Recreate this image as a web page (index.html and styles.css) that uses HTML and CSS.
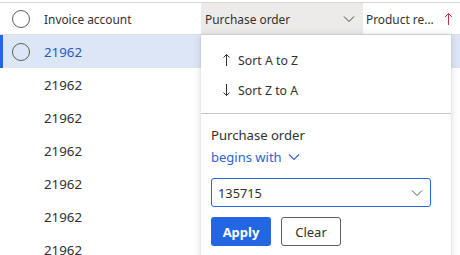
FILE: index.html
```html
<!DOCTYPE html>
<html>
<head>
<meta charset="utf-8">
<link rel="stylesheet" href="styles.css">
</head>
<body>
<div class="grid">
  <div class="row head">
    <div class="cell sel"><span class="circle"></span></div>
    <div class="cell inv">Invoice account</div>
    <div class="cell po active"><span>Purchase order</span>
      <svg class="chev" width="12" height="8" viewBox="0 0 12 8"><path d="M1 1.5 L6 6.5 L11 1.5" fill="none" stroke="#444" stroke-width="1"/></svg>
    </div>
    <div class="cell pr"><span>Product re...</span>
      <svg class="arrow" width="9" height="14" viewBox="0 0 9 14"><path d="M4.5 1.5 V13 M1 5 L4.5 1.5 L8 5" fill="none" stroke="#c4314b" stroke-width="1"/></svg>
    </div>
  </div>
  <div class="row selected">
    <div class="cell sel"><span class="circle"></span></div>
    <div class="cell inv">21962</div>
    <div class="cell po"></div>
    <div class="cell pr"></div>
  </div>
  <div class="row"><div class="cell sel"></div><div class="cell inv">21962</div><div class="cell po"></div><div class="cell pr"></div></div>
  <div class="row"><div class="cell sel"></div><div class="cell inv">21962</div><div class="cell po"></div><div class="cell pr"></div></div>
  <div class="row"><div class="cell sel"></div><div class="cell inv">21962</div><div class="cell po"></div><div class="cell pr"></div></div>
  <div class="row"><div class="cell sel"></div><div class="cell inv">21962</div><div class="cell po"></div><div class="cell pr"></div></div>
  <div class="row"><div class="cell sel"></div><div class="cell inv">21962</div><div class="cell po"></div><div class="cell pr"></div></div>
  <div class="row"><div class="cell sel"></div><div class="cell inv">21962</div><div class="cell po"></div><div class="cell pr"></div></div>

  <div class="menu">
    <div class="sorts">
      <div class="sort">
        <svg class="sarrow" width="9" height="14" viewBox="0 0 9 14"><path d="M4.5 1.5 V13 M1.5 4.5 L4.5 1.5 L7.5 4.5" fill="none" stroke="#323130" stroke-width="1"/></svg>
        <span>Sort A to Z</span>
      </div>
      <div class="sort">
        <svg class="sarrow" width="9" height="14" viewBox="0 0 9 14"><path d="M4.5 1 V12.5 M1.5 9.5 L4.5 12.5 L7.5 9.5" fill="none" stroke="#323130" stroke-width="1"/></svg>
        <span>Sort Z to A</span>
      </div>
    </div>
    <div class="filter">
      <div class="flabel">Purchase order</div>
      <div class="op">begins with
        <svg width="12" height="8" viewBox="0 0 12 8"><path d="M1 1.5 L6 6.5 L11 1.5" fill="none" stroke="#2b63d9" stroke-width="1.1"/></svg>
      </div>
      <div class="input"><span>135715</span>
        <svg width="12" height="8" viewBox="0 0 12 8"><path d="M1 1.5 L6 6.5 L11 1.5" fill="none" stroke="#555" stroke-width="1"/></svg>
      </div>
      <div class="buttons">
        <button class="btn apply">Apply</button>
        <button class="btn clear">Clear</button>
      </div>
    </div>
  </div>
</div>
</body>
</html>
```
FILE: styles.css
```css
* { box-sizing: border-box; }
html, body { margin: 0; padding: 0; background: #fff; }
body {
  font-family: "Noto Sans", "Open Sans", sans-serif;
  font-size: 13.3px;
  color: #323130;
  width: 460px;
  height: 255px;
  overflow: hidden;
}
.grid {
  position: relative;
  border-top: 1px solid #d6d6d6;
  margin-top: 2px;
}
.row {
  display: grid;
  grid-template-columns: 34px 167px 162px 97px;
  height: 33px;
}
.row.head {
  height: 32px;
  border-bottom: 1px solid #e1dfdd;
  font-size: 11.9px;
}
.cell {
  display: flex;
  align-items: center;
  white-space: nowrap;
  overflow: hidden;
}
.sel { padding-left: 12px; }
.circle {
  width: 18px; height: 18px;
  border: 1px solid #605e5c;
  border-radius: 50%;
  display: block;
}
.inv { padding-left: 10px; }
.po { padding-left: 4px; }
.head .po.active {
  background: #edebe9;
  justify-content: space-between;
  padding-right: 8px;
}
.pr { padding-left: 3px; }
.pr .arrow { margin-left: 10px; flex-shrink: 0; }
.selected { background: #dce6f7; position: relative; }
.selected::before {
  content: "";
  position: absolute;
  left: 0; top: 0; bottom: 0;
  width: 3px;
  background: #2266e3;
}
.selected .inv { color: #1f5bc2; }
.menu {
  position: absolute;
  left: 201px;
  top: 32px;
  width: 250px;
  height: 230px;
  background: #fff;
  box-shadow: 0 0 8px rgba(0,0,0,0.14), 0 0 2px rgba(0,0,0,0.08);
}
.sorts {
  padding: 10px 0 8px 0;
  border-bottom: 1px solid #c8c6c4;
}
.sort {
  height: 30px;
  display: flex;
  align-items: center;
  padding-left: 21px;
  font-size: 12.3px;
}
.sarrow { margin-right: 7px; }
.filter { padding: 10px 10px 0 10px; }
.flabel { font-size: 13.1px; height: 22px; display: flex; align-items: center; }
.op {
  color: #2b63d9;
  font-size: 13px;
  height: 22px;
  display: flex;
  align-items: center;
  gap: 6px;
}
.input {
  margin-top: 10px;
  height: 29px;
  width: 220px;
  border: 1px solid #2266e3;
  border-radius: 3px;
  display: flex;
  align-items: center;
  justify-content: space-between;
  padding: 0 7px 0 6px;
  font-size: 12.8px;
}
.buttons { display: flex; gap: 10px; margin-top: 10px; }
.btn {
  font-family: inherit;
  font-size: 13px;
  height: 29px;
  border-radius: 3px;
  padding: 0;
}
.apply {
  width: 60px;
  background: #2266e3;
  color: #fff;
  border: none;
  font-weight: 700;
}
.clear {
  width: 60px;
  background: #fff;
  color: #323130;
  border: 1px solid #605e5c;
}
```
